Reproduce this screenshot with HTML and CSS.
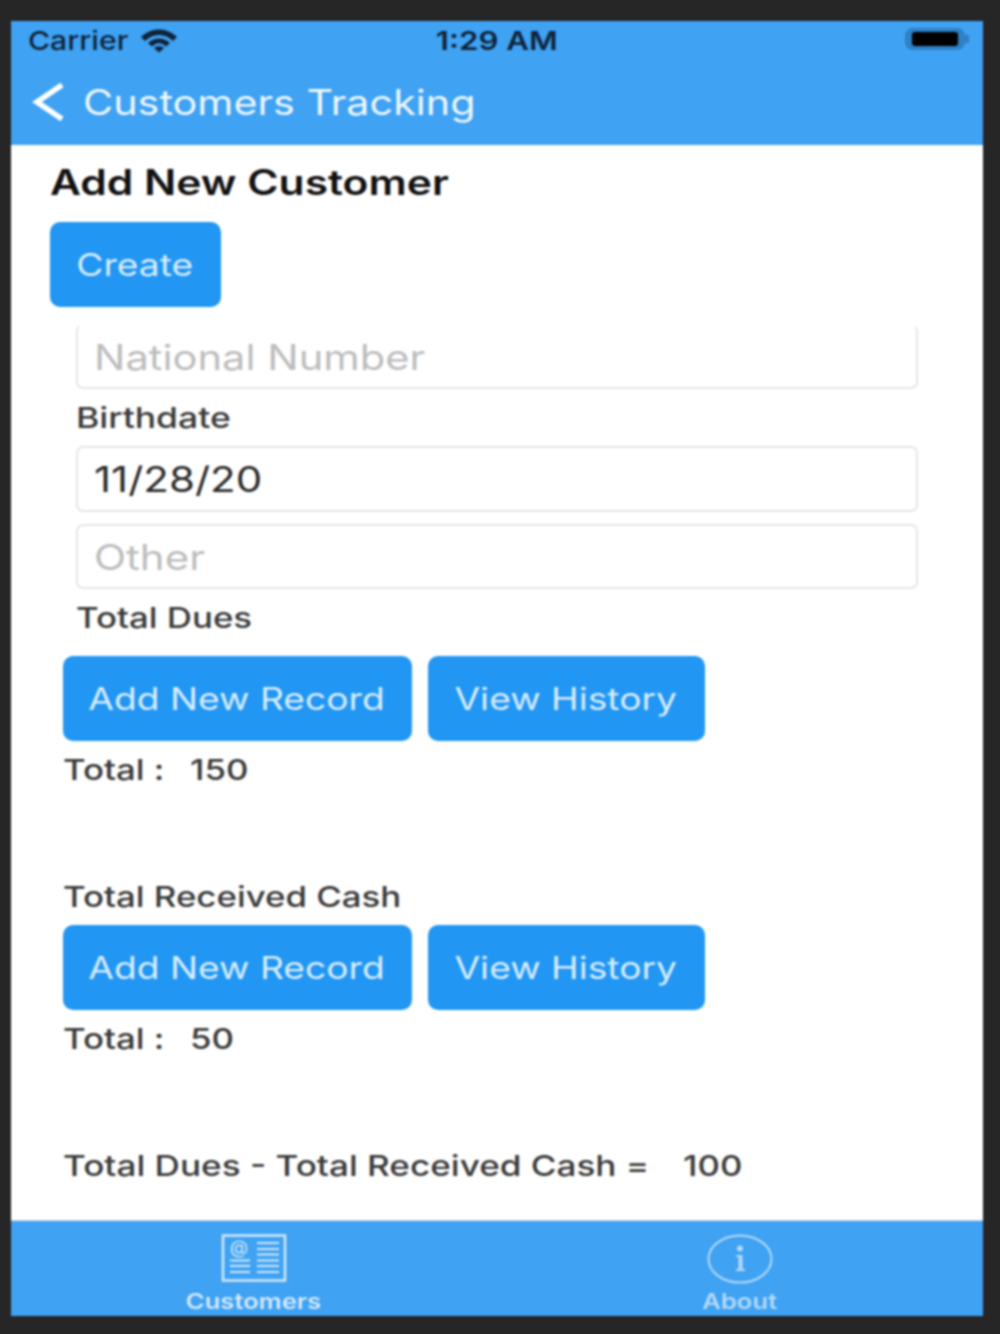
FILE: index.html
```html
<!DOCTYPE html>
<html lang="en">
<head>
  <meta charset="UTF-8">
  <title>Customers Tracking</title>
  <link rel="stylesheet" href="styles.css">
</head>
<body>
  <div class="phone">
    <div class="header">
      <div class="status-bar">
        <div class="status-left">
          <span class="stretch carrier">Carrier</span>
          <svg class="wifi" viewBox="0 0 38 25" width="38" height="25">
            <path d="M1 9 C11 -1 27 -1 37 9 L33 13 C25 5 13 5 5 13 Z" fill="#10243a"/>
            <path d="M8 15 C14 9 24 9 30 15 L26 18.500 C21 14 17 14 12 18.500 Z" fill="#10243a"/>
            <path d="M14 20 C17 17.500 21 17.500 24 20 L19 24.500 Z" fill="#10243a"/>
          </svg>
        </div>
        <div class="status-time"><span class="stretch-center">1:29 AM</span></div>
        <div class="status-right">
          <div class="battery"><div class="battery-fill"></div></div>
          <div class="battery-tip"></div>
        </div>
      </div>
      <div class="nav-bar">
        <svg class="back" viewBox="0 0 32 38" width="32" height="38">
          <path d="M30 2 L5 19 L30 36" fill="none" stroke="#fff" stroke-width="5.500"/>
        </svg>
        <span class="stretch nav-title">Customers Tracking</span>
      </div>
    </div>

    <div class="content">
      <h1 class="page-title"><span class="stretch">Add New Customer</span></h1>
      <button class="btn btn-create"><span class="stretch-center">Create</span></button>

      <div class="form">
        <div class="field field-cut"><span class="stretch national">National Number</span></div>
        <div class="form-label"><span class="stretch birthdate">Birthdate</span></div>
        <div class="field field-value"><span class="stretch">11/28/20</span></div>
        <div class="field field-other"><span class="stretch">Other</span></div>
        <div class="form-label"><span class="stretch">Total Dues</span></div>
      </div>

      <div class="section">
        <div class="btn-row">
          <button class="btn btn-add"><span class="stretch-center">Add New Record</span></button>
          <button class="btn btn-history"><span class="stretch-center">View History</span></button>
        </div>
        <div class="total"><span class="total-key"><span class="stretch">Total :</span></span><span class="stretch">150</span></div>
      </div>

      <div class="section section-cash">
        <div class="section-label"><span class="stretch">Total Received Cash</span></div>
        <div class="btn-row">
          <button class="btn btn-add"><span class="stretch-center">Add New Record</span></button>
          <button class="btn btn-history"><span class="stretch-center">View History</span></button>
        </div>
        <div class="total"><span class="total-key"><span class="stretch">Total :</span></span><span class="stretch">50</span></div>
      </div>

      <div class="balance"><span class="stretch balance-text">Total Dues - Total Received Cash =</span><span class="stretch">100</span></div>
    </div>

    <div class="tab-bar">
      <div class="tab tab-active">
        <svg class="tab-icon tab-icon-news" viewBox="0 0 66 48" width="66" height="48">
          <rect x="2" y="1.500" width="62" height="45" fill="none" stroke="#d4e9fb" stroke-width="2.500"/>
          <text class="icon-at" x="18" y="20" text-anchor="middle">@</text>
          <path d="M36 9 H58 M36 15 H58 M36 20.500 H58 M9 26.500 H29 M36 26.500 H58 M9 32 H29 M36 32 H58 M9 38 H29 M36 38 H58" stroke="#d4e9fb" stroke-width="2"/>
        </svg>
        <span class="stretch-center tab-label">Customers</span>
      </div>
      <div class="tab">
        <svg class="tab-icon" viewBox="0 0 66 50" width="66" height="50">
          <ellipse cx="33" cy="25" rx="31.500" ry="23.500" fill="none" stroke="#b5daf8" stroke-width="2"/>
          <circle cx="33" cy="14.500" r="3" fill="#b5daf8"/>
          <path d="M29 21 H35.500 V35 H38 V37 H29 V35 H31.500 V23 H29 Z" fill="#b5daf8"/>
        </svg>
        <span class="stretch-center tab-label">About</span>
      </div>
    </div>
  </div>
</body>
</html>
```

FILE: styles.css
```css
html, body {
  margin: 0;
  height: 1334px;
  overflow: hidden;
  background-color: #262626;
}
body {
  font-family: Inter, "Liberation Sans", sans-serif;
}
.phone {
  margin: 21px 0 0 11px;
  width: 972px;
  height: 1295px;
  display: flex;
  flex-direction: column;
  background-color: #fff;
  filter: blur(0.9px);
}

/* the screenshot is stretched sideways, so the text is too */
.stretch, .stretch-center {
  display: inline-block;
  transform: scaleX(1.2);
  transform-origin: left center;
}
.stretch-center {
  transform-origin: center;
}

/* header */
.header {
  height: 124px;
  flex: none;
  background-color: #3fa2f3;
  color: #fff;
}
.status-bar {
  height: 39px;
  display: grid;
  grid-template-columns: 1fr auto 1fr;
  align-items: center;
  padding: 0 14px 0 17px;
  color: #10243a;
  font-size: 26px;
  font-weight: 500;
}
.status-left {
  display: flex;
  align-items: center;
  gap: 26px;
}
.carrier {
  transform: scaleX(1.16);
}
.status-time {
  font-weight: 600;
  margin-right: 4px;
}
.status-right {
  display: flex;
  align-items: center;
  justify-content: flex-end;
  margin-top: -3px;
}
.battery {
  width: 60px;
  height: 22px;
  padding: 4px 7px;
  box-sizing: border-box;
  border-radius: 8px;
  background-color: #2f80c5;
}
.battery-fill {
  height: 100%;
  border-radius: 3px;
  background-color: #000;
}
.battery-tip {
  width: 4px;
  height: 8px;
  background-color: #2f80c5;
}
.nav-bar {
  display: flex;
  align-items: center;
  height: 85px;
  padding: 0 0 0 21px;
  gap: 19px;
  margin-top: -1px;
}
.nav-title {
  font-size: 35px;
  color: #eef7fe;
  transform: scaleX(1.18);
}

/* main content */
.content {
  flex: 1;
  padding-left: 39px;
  color: #222;
}
.page-title {
  margin: 18px 0 21px 0;
  font-size: 35px;
  line-height: 38px;
  font-weight: 600;
  color: #111;
}
.page-title .stretch {
  transform: scaleX(1.215);
}
.btn {
  display: block;
  height: 85px;
  padding: 0 2px 0 0;
  border: none;
  border-radius: 10px;
  background-color: #2196f3;
  color: #d8edfd;
  font-family: inherit;
  font-size: 31px;
}
.btn-create {
  width: 171px;
}
.btn-add {
  width: 349px;
}
.btn-history {
  width: 277px;
}
.btn-row {
  display: flex;
  gap: 16px;
}
.form {
  padding: 17px 65px 0 26px;
}
.field {
  height: 65px;
  box-sizing: border-box;
  padding-left: 16px;
  border: 2px solid #e6e6e6;
  border-radius: 7px;
  display: flex;
  align-items: center;
  font-size: 35px;
  color: #bdbdbd;
}
.field-cut {
  border-top-color: transparent;
}
.national {
  transform: scaleX(1.19);
}
.field-value {
  height: 66px;
  color: #2a2a2a;
}
.field-other {
  margin-top: 12px;
}
.form-label {
  font-size: 29px;
  font-weight: 500;
  line-height: 57px;
  color: #3a3a3a;
}
.birthdate {
  transform: scaleX(1.225);
}
.section {
  padding-left: 13px;
  margin-top: 10px;
}
.section-cash {
  margin-top: 79px;
}
.section-label {
  font-size: 29px;
  font-weight: 500;
  line-height: 38px;
  margin-bottom: 9px;
  color: #3a3a3a;
}
.total {
  display: flex;
  font-size: 29px;
  font-weight: 500;
  line-height: 58px;
  color: #3a3a3a;
}
.total-key {
  width: 127px;
}
.balance {
  display: flex;
  gap: 135px;
  margin-top: 79px;
  padding-left: 13px;
  font-size: 29px;
  font-weight: 500;
  line-height: 38px;
  color: #3a3a3a;
}
.balance-text {
  transform: scaleX(1.21);
}

/* tab bar */
.tab-bar {
  height: 96px;
  margin-top: -1px;
  flex: none;
  display: grid;
  grid-template-columns: 1fr 1fr;
  background-color: #3fa2f3;
  border-top: 1px solid #d8d8d8;
  box-sizing: border-box;
}
.tab {
  display: flex;
  flex-direction: column;
  align-items: center;
  padding-top: 13px;
  color: #b5daf8;
}
.tab-active {
  color: #d4e9fb;
}
.tab-icon {
  display: block;
  flex: none;
}
.tab-icon-news {
  margin-bottom: 2px;
}
.icon-at {
  font-size: 19px;
  fill: #d4e9fb;
}
.tab-label {
  font-size: 21px;
  font-weight: 600;
  line-height: 30px;
  margin-top: 3px;
  transform: scaleX(1.22);
}
```
